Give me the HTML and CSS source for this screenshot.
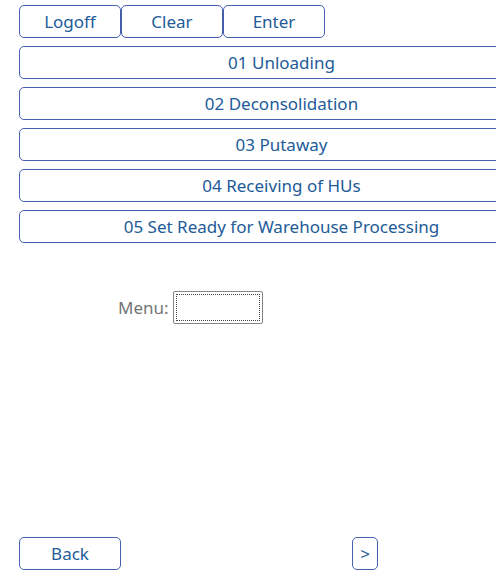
FILE: index.html
```html
<!DOCTYPE html>
<html lang="en">
<head>
  <meta charset="UTF-8">
  <meta name="viewport" content="width=device-width, initial-scale=1.0">
  <title>Warehouse Menu</title>
  <link rel="stylesheet" href="styles.css">
</head>
<body>

  <form class="screen">
    <div class="toolbar">
      <button type="button" class="btn">Logoff</button>
      <button type="button" class="btn">Clear</button>
      <button type="submit" class="btn">Enter</button>
    </div>

    <nav class="menu">
      <button type="button" class="btn">01 Unloading</button>
      <button type="button" class="btn">02 Deconsolidation</button>
      <button type="button" class="btn">03 Putaway</button>
      <button type="button" class="btn">04 Receiving of HUs</button>
      <button type="button" class="btn">05 Set Ready for Warehouse Processing</button>
    </nav>

    <div class="field">
      <label for="menuInput">Menu:</label>
      <input type="text" id="menuInput" maxlength="4">
    </div>

    <div class="footer">
      <button type="button" class="btn">Back</button>
      <button type="button" class="btn next">&gt;</button>
    </div>
  </form>

</body>
</html>
```

FILE: styles.css
```css
* {
  margin: 0;
  padding: 0;
  box-sizing: border-box;
}

body {
  font-family: 'Noto Sans', Arial, sans-serif;
  font-size: 17px;
  background-color: #fff;
}

.screen {
  display: flex;
  flex-direction: column;
  min-height: 100vh;
  padding: 5px 0 1px 19px;
  overflow: hidden;
}

/* Buttons */
.btn {
  width: 102px;
  height: 33px;
  border: 1px solid #465fae;
  border-radius: 5px;
  background-color: #fff;
  color: #225b98;
  font-family: inherit;
  font-size: inherit;
  cursor: pointer;
}

.btn:hover {
  background-color: #ebf5fe;
}

.toolbar {
  display: flex;
}

/* Menu entries run past the right edge of the screen */
.menu {
  display: flex;
  flex-direction: column;
  gap: 8px;
  margin: 8px -48px 0 0;
}

.menu .btn {
  width: 100%;
}

/* Menu number input */
.field {
  display: flex;
  align-items: center;
  gap: 4px;
  margin: 48px 0 48px 99px;
}

.field label {
  color: #757575;
}

.field input {
  width: 90px;
  height: 33px;
  padding: 0 8px;
  border: 1px solid #858585;
  border-radius: 2px;
  outline: 1px dotted #444;
  outline-offset: -4px;
  font-family: inherit;
  font-size: inherit;
}

/* Bottom buttons */
.footer {
  display: flex;
  gap: 231px;
  margin-top: auto;
}

.footer .next {
  width: 26px;
}
```
